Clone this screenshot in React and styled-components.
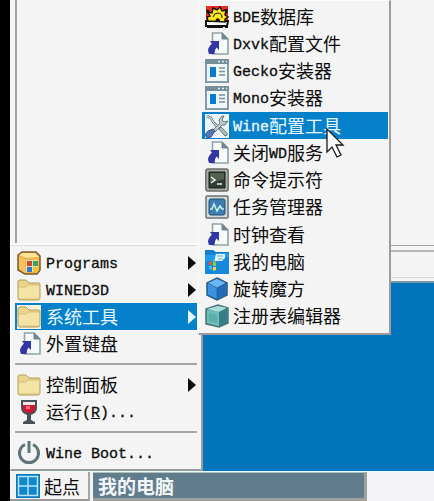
import React from 'react';
import styled, { createGlobalStyle, css } from 'styled-components';

const Global = createGlobalStyle`
  * { box-sizing: border-box; }
  html, body { margin: 0; }
  body { background: #000; overflow: hidden; }
  button { font: inherit; color: inherit; border: 0; margin: 0; background: none; text-align: left; }
`;

const Screen = styled.div`
  height: 100vh;
  padding-left: 10px;
  display: flex;
  flex-direction: column;
  background: #000;
  color: #0c0c0c;
  font-family: "Noto Sans CJK SC", sans-serif;
  font-size: 18px;
  line-height: 24px;
`;

const Desktop = styled.main`
  position: relative;
  flex: 1;
  min-height: 0;
  background: #0274bc;
`;

const ExplorerWindow = styled.section`
  display: flex;
  flex-direction: column;
  background: #f4f4f5;
  border-bottom: 2px solid #7798a8;
`;

const ExplorerPane = styled.div`
  height: 246px;
  margin-left: 5px;
  border-left: 2px solid #a2a2a2;
  border-bottom: 1px solid #a2a2a2;
`;

const StatusBar = styled.div`
  height: 28px;
  margin-top: 4px;
  border-top: 2px solid #b5b5b5;
  border-bottom: 1px solid #d6d6d6;
`;

const WindowFoot = styled.div`
  height: 3px;
`;

const menuFrame = css`
  position: absolute;
  display: flex;
  flex-direction: column;
  background: #f4f4f5;
  border: 1px solid #fcfcfc;
  border-right: 2px solid #9b9b9b;
  border-bottom: 2px solid #9b9b9b;
`;

const StartMenu = styled.nav`
  ${menuFrame}
  left: 0;
  bottom: 0;
  width: 193px;
  padding: 4px 4px 3px;
  border-top: 2px solid #fff;
  box-shadow: inset 0 1px 0 #dedede;
`;

const SubMenu = styled.nav`
  ${menuFrame}
  left: 188px;
  top: 0;
  width: 193px;
  min-height: 335px;
  padding: 2px 1px 3px 3px;
`;

const MenuItem = styled.button`
  flex: 1 0 27px;
  display: flex;
  align-items: center;
  gap: ${p => (p.$root ? 5 : 4)}px;
  padding: 0 1px 0 ${p => (p.$root ? 2 : 3)}px;
  white-space: nowrap;
  background: ${p => (p.$active ? '#0581cb' : 'transparent')};
  color: ${p => (p.$active ? '#e9f7ff' : '#0c0c0c')};
`;

const Label = styled.span`
  flex: 1;
  padding-bottom: 2px;
`;

const Latin = styled.span`
  font-family: "Liberation Mono", monospace;
  font-size: 15px;
  line-height: 1;
  vertical-align: 2px;
  -webkit-text-stroke: 0.3px;
`;

const Separator = styled.hr`
  width: 100%;
  height: 2px;
  margin: 6px 0;
  border: 0;
  background: #a5a5a5;
`;

const Icon = styled.svg`
  flex: none;
  width: 24px;
  height: 24px;
`;

const Arrow = styled.svg`
  flex: none;
  width: 8px;
  height: 16px;
  fill: currentColor;
`;

const Pointer = styled.svg`
  position: absolute;
  left: 316px;
  top: 127px;
  width: 19px;
  height: 32px;
  pointer-events: none;
`;

const Taskbar = styled.footer`
  display: flex;
  gap: 3px;
  height: 30px;
  background: #f4f4f6;
  border-top: 1px solid #e6fcff;
`;

const StartButton = styled.button`
  display: flex;
  align-items: center;
  gap: 4px;
  width: 80px;
  padding: 0 6px;
  background: #f4f4f5;
  border-right: 2px solid #a5a5a5;
  border-bottom: 2px solid #999;
  font-size: 18px;
  white-space: nowrap;
`;

const TaskButton = styled.button`
  flex: 0 1 274px;
  padding: 0 5px;
  background: #617d8d;
  color: #f3f7f9;
  border-top: 1px solid #b1c2bc;
  border-right: 3px solid #a0a09d;
  border-bottom: 3px solid #a0a09d;
  font-size: 19px;
  font-weight: 700;
`;

const GearDisk = () => (
  <Icon viewBox="0 0 24 24">
    <path d="M1 1h22v15H1z" fill="#e82d25" />
    <path d="M1 4l4 2-3 3M23 4l-4 2 3 3" fill="#111" />
    <path d="M1 16h22l-1 5H1z" fill="#fff" stroke="#111" strokeWidth="2" />
    <path d="M2 22h16m2 0h3" stroke="#111" strokeWidth="2" />
    <path d="M3 16l-1-4 3-1-2-4 4 1 1-5 4 2 3-3 2 4 4-1-1 5 3 2-3 2 0 3z" fill="#ffe71e" stroke="#111" strokeWidth="1.4" />
    <path d="M8 12q1-4 5-4t4 5" fill="none" stroke="#111" strokeWidth="1" />
    <path d="M10 17l1-3 2-1 2 2v2z" fill="#111" />
  </Icon>
);

const Shortcut = () => (
  <Icon viewBox="0 0 24 24">
    <path d="M7.5 1h9.5l6 6v15H7.5z" fill="#f5f9fa" stroke="#91a2aa" strokeWidth="1.6" />
    <path d="M17 1v6h6z" fill="#71868d" stroke="#71868d" />
    <path d="M5 9h9v9l-2.500-2.500q-2 2-2 6.500H4q-3-5 3-10.500z" fill="#3236a5" />
  </Icon>
);

const Installer = () => (
  <Icon viewBox="0 0 24 24">
    <path d="M1 1h22v22H1z" fill="#eff7fa" stroke="#849ca7" strokeWidth="2" />
    <path d="M0 0h24v5H0z" fill="#768e99" />
    <path d="M13 2.5h2m2 0h2m2 0h1" stroke="#e6f0f5" strokeWidth="1.4" />
    <path d="M5 8h6v10H5z" fill="#087bd0" />
    <path d="M14 9h6m-6 3.500h6m-6 3.500h6" stroke="#78909b" strokeWidth="1.6" />
  </Icon>
);

const Tools = () => (
  <Icon viewBox="0 0 24 24">
    <path d="M0 0h24v24H0z" fill="#eef5f8" />
    <path d="M2 2l4 2 2 4 7 7" fill="none" stroke="#758086" strokeWidth="2.6" />
    <path d="M2 2l4 2 2 4 7 7" fill="none" stroke="#e0e7e9" strokeWidth="1" />
    <path d="M14 15l2-2 6 6q1 3-2 3z" fill="#b4bcbf" stroke="#66767c" />
    <path d="M17 2l-3 4 1 3-7 7 2 2 7-7 3 0 3-4-4 1-2-2 2-4z" fill="#c0cacf" stroke="#66767c" />
    <path d="M8 15l2 2-4 6-4 1-2-3 3-4z" fill="#5575b8" stroke="#3c5287" />
  </Icon>
);

const Terminal = () => (
  <Icon viewBox="0 0 24 24">
    <rect x=".8" y="1" width="22.4" height="22" rx="2" fill="#a9aca5" stroke="#686c65" strokeWidth="1.4" />
    <path d="M4 4h16v16H4z" fill="#303c35" stroke="#171e1a" />
    <path d="M5 5h14v6L5 15z" fill="#52614d" />
    <path d="M6 9l4 3-4 3m6 1h5" fill="none" stroke="#edf3e8" strokeWidth="1.5" />
  </Icon>
);

const Monitor = () => (
  <Icon viewBox="0 0 24 24">
    <rect x="1" y="1" width="22" height="22" rx="1" fill="#d6dad7" stroke="#66747a" strokeWidth="1.5" />
    <rect x="4" y="4" width="16" height="16" rx="2" fill="#3c7eb0" stroke="#1d4f7b" />
    <path d="M5 14h2l2-5 3 7 3-5 2 3h2" fill="none" stroke="#c4f0ec" strokeWidth="1.5" />
  </Icon>
);

const Computer = () => (
  <Icon viewBox="0 0 24 24">
    <path d="M0 0h8l3 2h13v22H0z" fill="#147dcc" />
    <path d="M0 5h9l2-2h13v21H0z" fill="#219bea" />
    <path d="M11 4h9v6l-2 2H9z" fill="#e8f7ff" />
    <path d="M12 6h6m-5 3h5" stroke="#63a4c8" />
    <path d="M0 11h17l4-4h3v17H0z" fill="#1689da" />
    <path d="M4 12l3-1v4H4z" fill="#f25d2e" /><path d="M8 11l3 1v4H8z" fill="#80d346" />
    <path d="M4 16h3v4l-3-1z" fill="#38bdf2" /><path d="M8 17h3v3l-3 1z" fill="#ffd13c" />
  </Icon>
);

const BlueCube = () => (
  <Icon viewBox="0 0 24 24">
    <path d="M12 1l10 5v12l-10 5-10-5V6z" fill="#3b93e6" stroke="#295a83" strokeWidth="1.5" />
    <path d="M3 6l9-4 9 4-9 5z" fill="#68b7f6" />
    <path d="M12 11l9-5v12l-9 4z" fill="#216bb8" />
    <path d="M3 6l9 5 9-5M12 11v11" fill="none" stroke="#295a83" strokeWidth=".7" />
  </Icon>
);

const RegistryCube = () => (
  <Icon viewBox="0 0 24 24">
    <path d="M1 5l12-4 10 3v15l-9 4-13-3z" fill="#58a7a6" stroke="#467478" strokeWidth="1.5" />
    <path d="M2 5l11-3 9 2-8 4z" fill="#a8dfd9" />
    <path d="M14 8l8-4v15l-8 3z" fill="#347f86" />
    <path d="M2 6l12 2v14L2 19z" fill="#70bdba" />
    <path d="M4 9l8 2v8l-8-2z" fill="#5baeac" />
  </Icon>
);

const Programs = () => (
  <Icon viewBox="0 0 24 24">
    <path d="M1 4l4-3h14l4 4v14l-3 4H8l-7-4z" fill="#edac3c" stroke="#795a32" strokeWidth="1.5" />
    <path d="M2 4l4-2h12l4 4-13 1z" fill="#ffe397" />
    <path d="M2 5l6 3v14l-6-4z" fill="#f6c25b" />
    <path d="M8 8l14-2v13l-2 3H8z" fill="#efb950" />
    <path d="M9 9h12v12H9z" fill="#e9ddbe" />
    <path d="M10 10h5v5h-5z" fill="#d84729" /><path d="M16 10h5v5h-5z" fill="#3ba35e" />
    <path d="M10 16h5v5h-5z" fill="#2d7bc8" /><path d="M16 16h5v5h-5z" fill="#f3c227" />
  </Icon>
);

const Folder = ({ $active }) => (
  <Icon viewBox="0 0 24 24">
    {$active && <path d="M0 0h24v24H0z" fill="#f7f3df" />}
    <path d="M1 20V4q0-2 2-2h6l3 3h10q1 0 1 2v13q0 2-2 2H3q-2 0-2-2z" fill="#ead58c" stroke="#b59d56" />
    <path d="M1.5 9h7l3-2h11v13q0 1-1 1h-19q-1 0-1-1z" fill="#f3e3a4" stroke="#ceb974" strokeWidth=".8" />
  </Icon>
);

const WineGlass = () => (
  <Icon viewBox="0 0 24 24">
    <path d="M4 0h16v8q0 5-6 7v5l4 2v2H6v-2l4-2v-5Q4 13 4 8z" fill="#485154" />
    <path d="M6 2h12v3H6z" fill="#f2e5e8" />
    <path d="M6 5h12v3q0 5-6 5T6 8z" fill="#ce1738" />
    <path d="M9 6h4v3H9z" fill="#ff6b78" />
  </Icon>
);

const Power = () => (
  <Icon viewBox="0 0 24 24">
    <path d="M8 3.500a9.500 9.500 0 1 0 8 0" fill="none" stroke="#60747b" strokeWidth="3" />
    <path d="M12 0v12" stroke="#60747b" strokeWidth="3" />
  </Icon>
);

const WindowsMark = () => (
  <Icon viewBox="0 0 24 24">
    <path d="M0 0h24v24H0z" fill="#087abc" />
    <path d="M2 2h20v20H2z" fill="#1088ce" />
    <path d="M2.500 2.500h19v19h-19zM12 2v20M2 12h20" fill="none" stroke="#b8e4fa" strokeWidth="1.5" />
  </Icon>
);

const tools = [
  ['BDE数据库', GearDisk],
  ['Dxvk配置文件', Shortcut],
  ['Gecko安装器', Installer],
  ['Mono安装器', Installer],
  ['Wine配置工具', Tools, true],
  ['关闭WD服务', Shortcut],
  ['命令提示符', Terminal],
  ['任务管理器', Monitor],
  ['时钟查看', Shortcut],
  ['我的电脑', Computer],
  ['旋转魔方', BlueCube],
  ['注册表编辑器', RegistryCube],
];

const Mixed = ({ text }) =>
  text.split(/([\x20-\x7e]+)/).filter(Boolean).map((part, i) =>
    /^[\x20-\x7e]/.test(part) ? <Latin key={i}>{part}</Latin> : part
  );

const Entry = ({ text, icon: Glyph, active, root, more, children }) => (
  <MenuItem type="button" role="menuitem" $active={active} $root={root} aria-haspopup={more ? 'menu' : undefined}>
    <Glyph $active={active} />
    <Label>{children || <Mixed text={text} />}</Label>
    {more && <Arrow viewBox="0 0 8 16"><path d="M0 1l8 7-8 7z" /></Arrow>}
  </MenuItem>
);

export default function App() {
  return (
    <>
      <Global />
      <Screen>
        <Desktop>
          <ExplorerWindow>
            <ExplorerPane />
            <StatusBar />
            <WindowFoot />
          </ExplorerWindow>
          <StartMenu role="menu" aria-label="起点">
            <Entry root more text="Programs" icon={Programs} />
            <Entry root more text="WINED3D" icon={Folder} />
            <Entry root more active text="系统工具" icon={Folder} />
            <Entry root text="外置键盘" icon={Shortcut} />
            <Separator />
            <Entry root more text="控制面板" icon={Folder} />
            <Entry root icon={WineGlass}>
              运行<Latin>(<u>R</u>)...</Latin>
            </Entry>
            <Separator />
            <Entry root text="Wine Boot..." icon={Power} />
          </StartMenu>
          <SubMenu role="menu" aria-label="系统工具">
            {tools.map(([text, icon, active]) => (
              <Entry key={text} text={text} icon={icon} active={active} />
            ))}
          </SubMenu>
          <Pointer viewBox="0 0 19 32">
            <path d="M1 2v23l5-5 5 10 4-2-5-10h7z" fill="#fff" stroke="#171717" strokeWidth="1.3" />
          </Pointer>
        </Desktop>
        <Taskbar>
          <StartButton type="button"><WindowsMark />起点</StartButton>
          <TaskButton type="button">我的电脑</TaskButton>
        </Taskbar>
      </Screen>
    </>
  );
}
